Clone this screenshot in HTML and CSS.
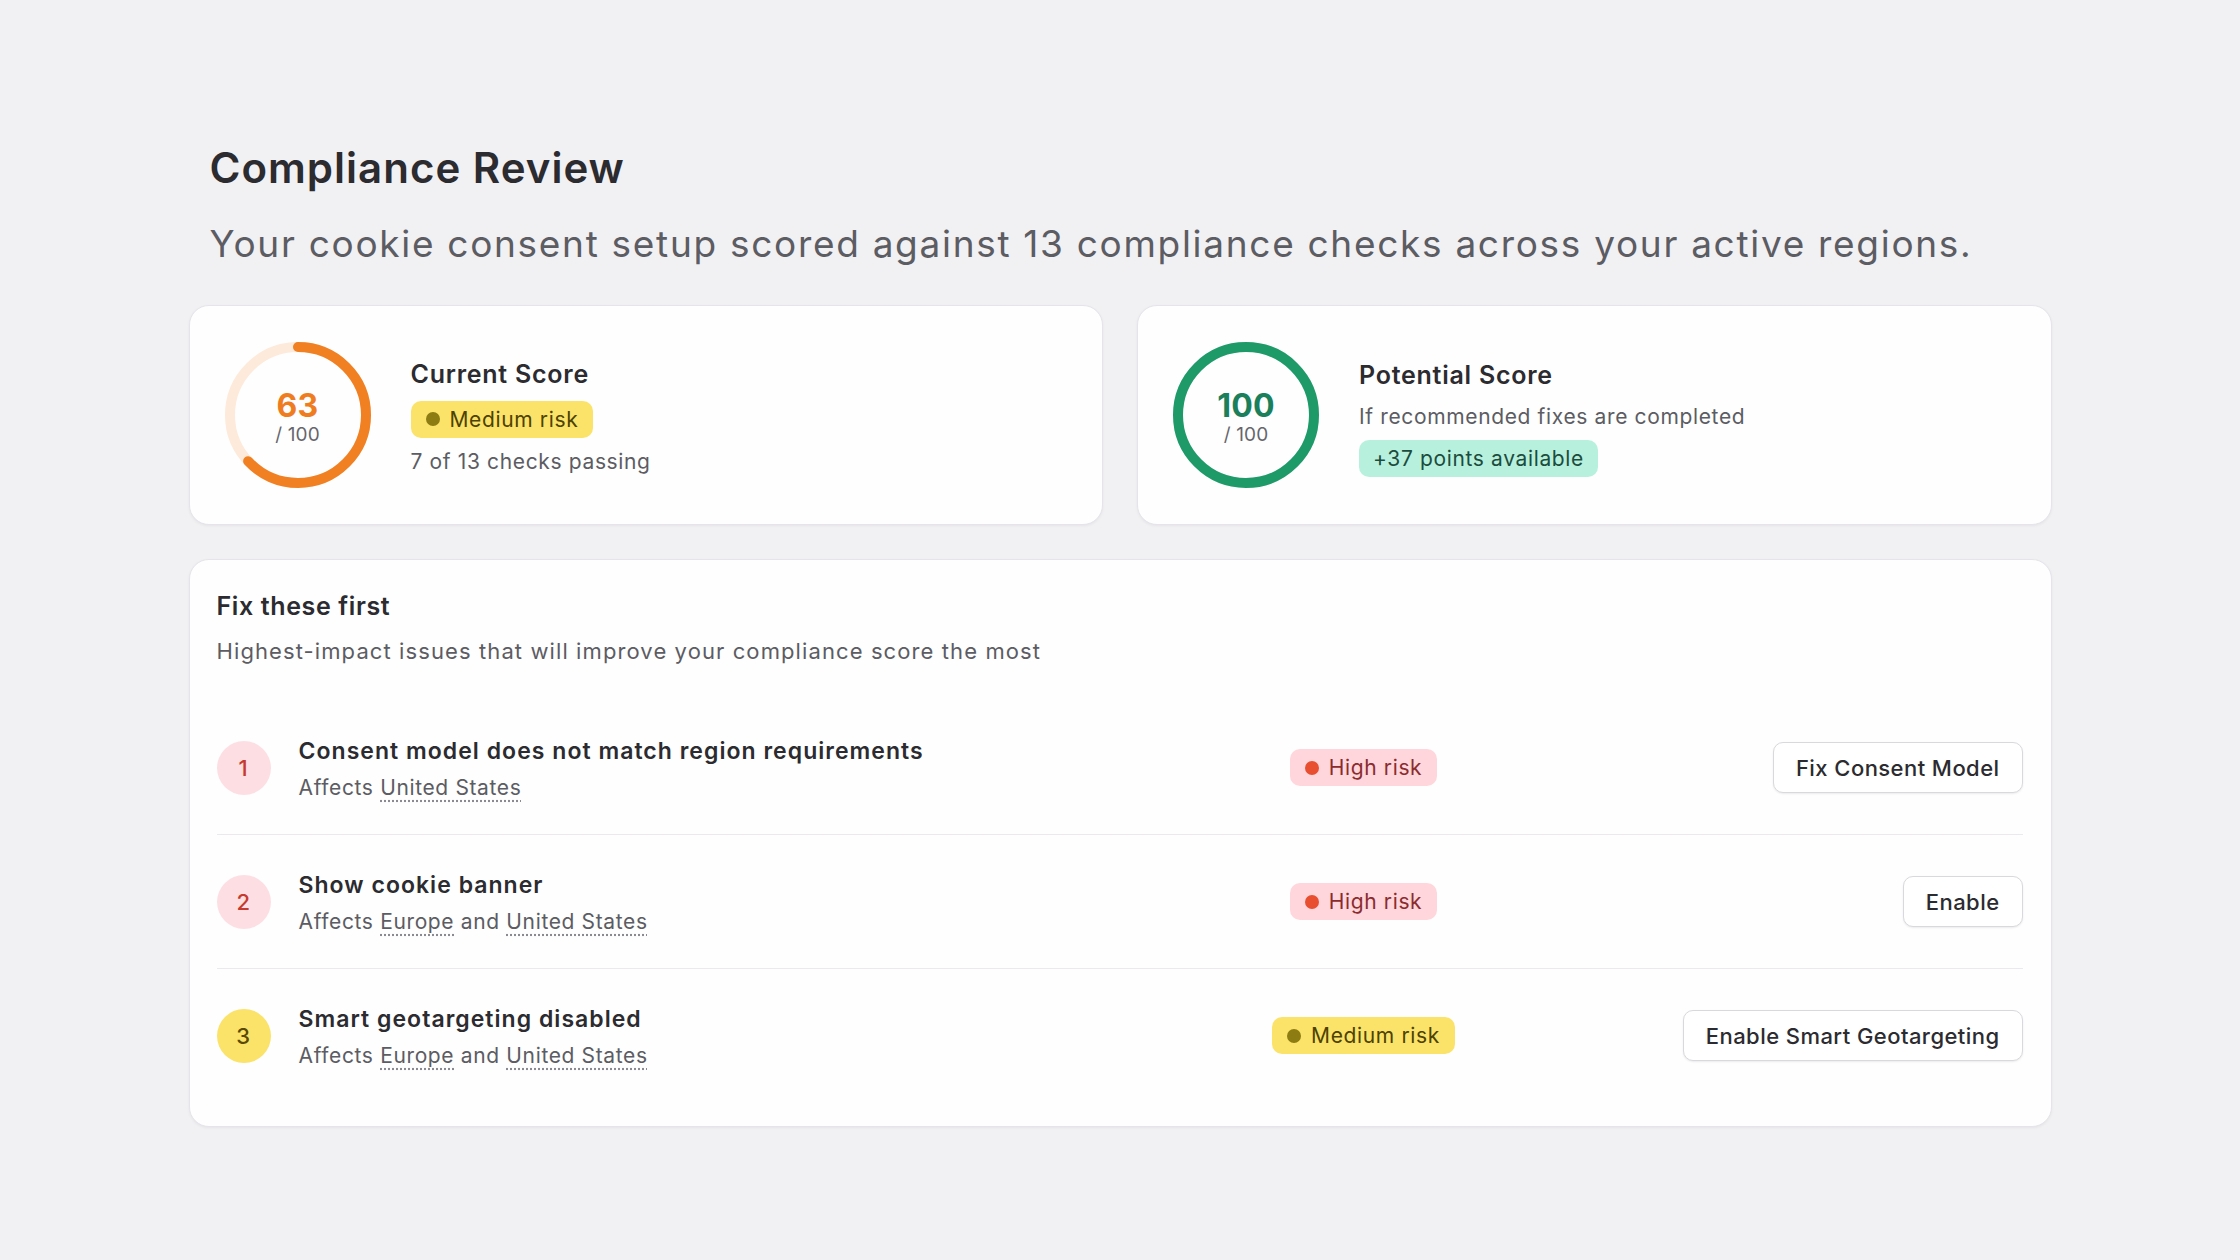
FILE: index.html
```html
<!DOCTYPE html>
<html lang="en">
<head>
<meta charset="UTF-8">
<title>Compliance Review</title>
<link rel="stylesheet" href="styles.css">
</head>
<body>
<div class="page">

	<div class="header">
		<h1>Compliance Review</h1>
		<p class="lead">Your cookie consent setup scored against 13 compliance checks across your active regions.</p>
	</div>

	<div class="scores">
		<div class="card score-card">
			<div class="ring">
				<svg width="146" height="146" viewBox="0 0 146 146">
					<circle class="track orange-track" cx="73" cy="73" r="68"></circle>
					<!-- 63 of 100: 0.63 * 2*pi*68 = 269.2 -->
					<circle class="arc orange-arc" cx="73" cy="73" r="68" stroke-dasharray="269.2 427.3" transform="rotate(-90 73 73)"></circle>
				</svg>
				<div class="ring-label">
					<span class="ring-num orange">63</span>
					<span class="ring-of">/ 100</span>
				</div>
			</div>
			<div class="score-info">
				<h2>Current Score</h2>
				<span class="badge medium"><i class="dot"></i>Medium risk</span>
				<p class="muted checks">7 of 13 checks passing</p>
			</div>
		</div>

		<div class="card score-card">
			<div class="ring">
				<svg width="146" height="146" viewBox="0 0 146 146">
					<circle class="track green-track" cx="73" cy="73" r="68"></circle>
					<circle class="arc green-arc" cx="73" cy="73" r="68" stroke-dasharray="427.3 427.3" transform="rotate(-90 73 73)"></circle>
				</svg>
				<div class="ring-label">
					<span class="ring-num green">100</span>
					<span class="ring-of">/ 100</span>
				</div>
			</div>
			<div class="score-info">
				<h2>Potential Score</h2>
				<p class="muted fixes">If recommended fixes are completed</p>
				<span class="badge points">+37 points available</span>
			</div>
		</div>
	</div>

	<div class="card fixes-card">
		<h2>Fix these first</h2>
		<p class="muted intro">Highest-impact issues that will improve your compliance score the most</p>

		<div class="issue">
			<span class="num high">1</span>
			<div class="issue-text">
				<div class="issue-title">Consent model does not match region requirements</div>
				<div class="affects">Affects <span class="region">United States</span></div>
			</div>
			<div class="risk"><span class="badge high"><i class="dot"></i>High risk</span></div>
			<div class="action"><button class="btn">Fix Consent Model</button></div>
		</div>

		<div class="issue">
			<span class="num high">2</span>
			<div class="issue-text">
				<div class="issue-title">Show cookie banner</div>
				<div class="affects">Affects <span class="region">Europe</span> and <span class="region">United States</span></div>
			</div>
			<div class="risk"><span class="badge high"><i class="dot"></i>High risk</span></div>
			<div class="action"><button class="btn">Enable</button></div>
		</div>

		<div class="issue">
			<span class="num medium">3</span>
			<div class="issue-text">
				<div class="issue-title">Smart geotargeting disabled</div>
				<div class="affects">Affects <span class="region">Europe</span> and <span class="region">United States</span></div>
			</div>
			<div class="risk"><span class="badge medium"><i class="dot"></i>Medium risk</span></div>
			<div class="action"><button class="btn">Enable Smart Geotargeting</button></div>
		</div>
	</div>

</div>
</body>
</html>
```

FILE: styles.css
```css
body {
	margin: 0;
	background-color: #f1f0f3;
	font-family: "Inter", "Noto Sans", sans-serif;
	letter-spacing: 0.04em;
	color: #2b2b30;
}

.page {
	width: 1863px;
	margin: 0 auto;
	padding: 142px 0 80px;
}

.header {
	padding-left: 21px;
}

h1 {
	margin: 0;
	font-size: 42px;
	line-height: 52px;
	font-weight: 600;
	letter-spacing: 0.024em;
	color: #2b2b30;
}

.lead {
	margin: 28px 0 0;
	font-size: 37px;
	line-height: 44px;
	letter-spacing: 1.7px;
	color: #5c5c63;
}

.card {
	background-color: #fefefe;
	border: 1px solid #e6e4ea;
	border-radius: 20px;
	box-shadow: 0 1px 3px rgba(0, 0, 0, 0.05);
}

.muted {
	color: #5c5c63;
}

/* score cards */

.scores {
	display: grid;
	grid-template-columns: 1fr 1fr;
	gap: 34px;
	margin-top: 39px;
}

.score-card {
	display: flex;
	align-items: center;
	gap: 40px;
	padding: 36px 35px;
}

.ring {
	position: relative;
	width: 146px;
	height: 146px;
	flex: none;
}

.ring svg {
	display: block;
}

.track,
.arc {
	fill: none;
	stroke-width: 10;
}

.arc {
	stroke-linecap: round;
}

.orange-track { stroke: #fdeada; }
.orange-arc { stroke: #f08022; }
.green-track { stroke: #d9f3e8; }
.green-arc { stroke: #1e9a69; }

.ring-label {
	position: absolute;
	inset: 0;
	display: flex;
	flex-direction: column;
	align-items: center;
	justify-content: center;
	padding-top: 4px;
	letter-spacing: 0.01em;
}

.ring-num {
	font-size: 32px;
	line-height: 34px;
	font-weight: 700;
}

.ring-num.orange { color: #ef7d20; }
.ring-num.green { color: #1a805b; }

.ring-of {
	margin-top: 1px;
	font-size: 19px;
	line-height: 22px;
	color: #66666d;
}

.score-info {
	display: flex;
	flex-direction: column;
	align-items: flex-start;
	padding-top: 4px;
}

.score-info h2 {
	margin: 0;
	font-size: 25px;
	line-height: 34px;
	font-weight: 600;
	letter-spacing: 0.03em;
}

.checks {
	margin: 8px 0 0;
	font-size: 21px;
	line-height: 32px;
}

.fixes {
	margin: 9px 0 7px;
	font-size: 21px;
	line-height: 32px;
}

/* badges */

.badge {
	display: inline-flex;
	align-items: center;
	gap: 10px;
	height: 37px;
	padding: 0 15px;
	border-radius: 10px;
	font-size: 21px;
	white-space: nowrap;
}

.score-info .badge {
	margin-top: 10px;
}

.score-info .fixes + .badge {
	margin-top: 0;
}

.dot {
	width: 14px;
	height: 14px;
	border-radius: 50%;
}

.badge.medium {
	background-color: #fbe36a;
	color: #4d4200;
}

.badge.medium .dot {
	background-color: #8c7c12;
}

.badge.high {
	background-color: #ffd6dc;
	color: #8a2c2e;
}

.badge.high .dot {
	background-color: #e84f30;
}

.badge.points {
	padding: 0 14px;
	background-color: #b7f1de;
	color: #1c4c3d;
}

/* fix list */

.fixes-card {
	margin-top: 34px;
	padding: 27px 28px 24px 27px;
}

.fixes-card h2 {
	margin: 0;
	font-size: 25px;
	line-height: 38px;
	font-weight: 600;
	letter-spacing: 0.025em;
}

.intro {
	margin: 9px 0 33px;
	font-size: 22px;
	line-height: 34px;
	letter-spacing: 0.05em;
}

.issue {
	display: grid;
	grid-template-columns: 54px 1fr 182px 540px;
	column-gap: 28px;
	align-items: center;
	height: 133px;
	border-bottom: 1px solid #ebe9ee;
}

.issue:last-child {
	border-bottom: none;
}

.num {
	display: flex;
	align-items: center;
	justify-content: center;
	width: 54px;
	height: 54px;
	border-radius: 50%;
	font-size: 22px;
	font-weight: 500;
}

.num.high {
	background-color: #fddfe3;
	color: #c53a2e;
}

.num.medium {
	background-color: #fbe36a;
	color: #5a4a00;
}

.issue-text {
	padding-top: 2px;
}

.issue-title {
	font-size: 23px;
	line-height: 34px;
	font-weight: 600;
	letter-spacing: 0.045em;
}

.affects {
	margin-top: 4px;
	font-size: 21px;
	line-height: 32px;
	color: #5c5c63;
}

.region {
	text-decoration: underline dotted #8a8a90;
	text-underline-offset: 6px;
}

.risk {
	display: flex;
	justify-content: center;
}

.action {
	display: flex;
	justify-content: flex-end;
}

.btn {
	height: 51px;
	padding: 0 22px;
	background-color: #fff;
	border: 1px solid #d9d8dd;
	border-radius: 10px;
	box-shadow: 0 1px 2px rgba(0, 0, 0, 0.08);
	font-family: inherit;
	font-size: 22px;
	font-weight: 500;
	letter-spacing: 0.02em;
	color: #2b2b30;
}
```
